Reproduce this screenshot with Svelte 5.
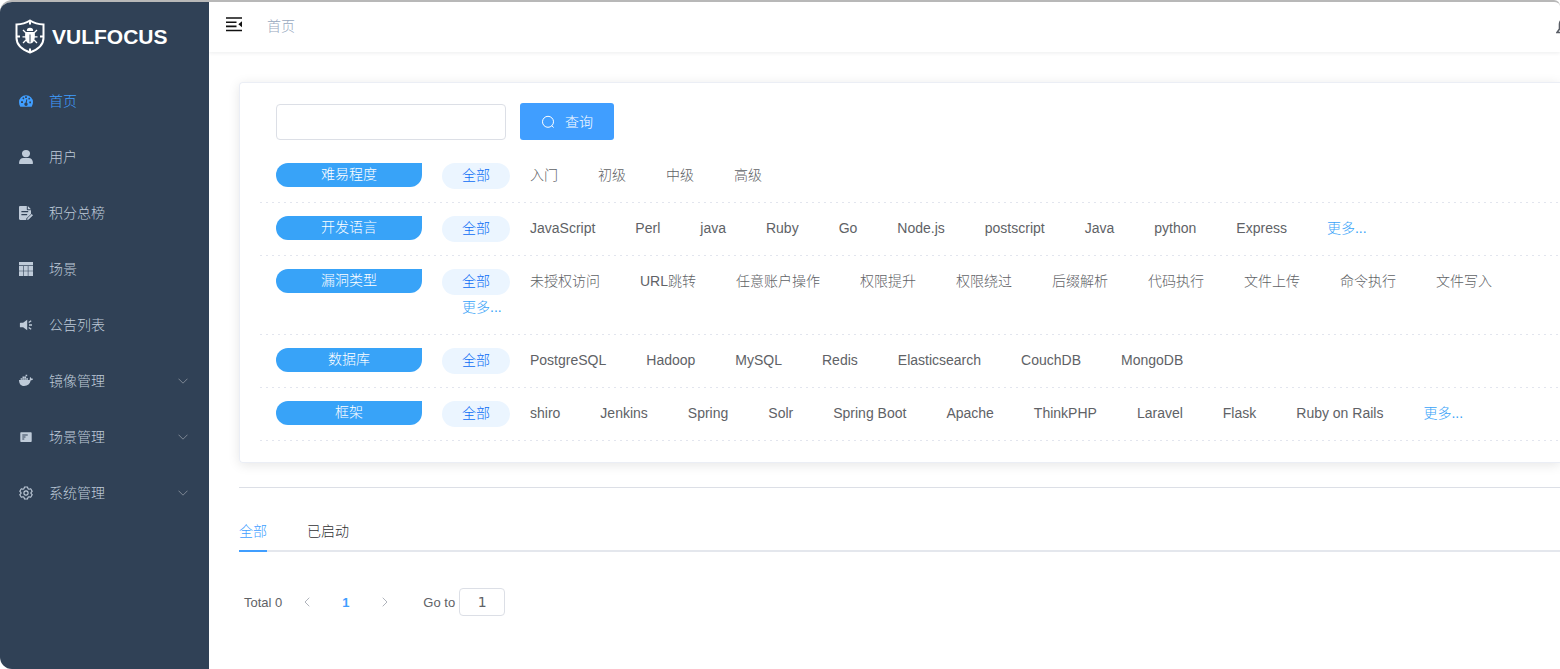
<script>
  let keyword = $state('');
  let page = $state('1');

  const menu = [
    { icon: 'dashboard', label: '首页', active: true },
    { icon: 'user', label: '用户' },
    { icon: 'score', label: '积分总榜' },
    { icon: 'table', label: '场景' },
    { icon: 'notice', label: '公告列表' },
    { icon: 'docker', label: '镜像管理', sub: true },
    { icon: 'scene', label: '场景管理', sub: true },
    { icon: 'gear', label: '系统管理', sub: true }
  ];

  const filters = [
    { name: '难易程度', options: ['入门', '初级', '中级', '高级'] },
    {
      name: '开发语言',
      options: ['JavaScript', 'Perl', 'java', 'Ruby', 'Go', 'Node.js', 'postscript', 'Java', 'python', 'Express'],
      more: true
    },
    {
      name: '漏洞类型',
      options: ['未授权访问', 'URL跳转', '任意账户操作', '权限提升', '权限绕过', '后缀解析', '代码执行', '文件上传', '命令执行', '文件写入'],
      more: true
    },
    { name: '数据库', options: ['PostgreSQL', 'Hadoop', 'MySQL', 'Redis', 'Elasticsearch', 'CouchDB', 'MongoDB'] },
    {
      name: '框架',
      options: ['shiro', 'Jenkins', 'Spring', 'Solr', 'Spring Boot', 'Apache', 'ThinkPHP', 'Laravel', 'Flask', 'Ruby on Rails'],
      more: true
    }
  ];
</script>

{#snippet glyph(name)}
  <svg class="glyph" viewBox="0 0 14 14" fill="currentColor" aria-hidden="true">
    {#if name === 'dashboard'}
      <path fill-rule="evenodd" d="M7 1.2a7 7 0 0 0-7 7c0 1.5.4 2.9 1.2 4.2.1.2.3.3.5.3h10.6c.2 0 .4-.1.5-.3A7.900 7.900 0 0 0 14 8.200a7 7 0 0 0-7-7zM2 7.300h2v1.800H2zM3.300 4l1.300-.7.8 1.500-1.300.8zM6.100 2.200h1.800V4H6.100zM10 3.400l1.300 1-1 1.300L9.100 5zM10.300 7.500H12v1.700h-1.700zM7.300 5.300l1 .2-.6 3.200c.6.3 1 .8 1 1.500a1.700 1.700 0 1 1-2-1.600z" />
    {:else if name === 'user'}
      <ellipse cx="7" cy="3.600" rx="4" ry="3.600" />
      <path d="M0 13.200C0 9.700 2 8 4.300 8h5.400c2.300 0 4.300 1.700 4.300 5.200 0 .5-.3.8-.8.8H.8c-.5 0-.8-.3-.8-.8z" />
    {:else if name === 'score'}
      <path fill-rule="evenodd" d="M1.200 0h6.600v3.200c0 .6.4 1 1 1H12v3.700L7.300 12.600V14H1.200C.5 14 0 13.500 0 12.800V1.200C0 .5.500 0 1.200 0zM2.400 5v1.200h6.800V5zM2.400 8v1.200h5.800V8z" />
      <path d="M8.800 0 12 3.200H8.800zM12.700 8l1.300 1.300L9.700 13.600l-1.600.4.300-1.700z" />
    {:else if name === 'table'}
      <path d="M0 0h14v3.300H0z" />
      <path d="M0 4h4v4.700H0zM4.600 4h4.200v4.700H4.600zM9.400 4H14v4.700H9.400zM0 9.300h4V14H0zM4.600 9.300h4.200V14H4.600zM9.400 9.300H14V14H9.400z" />
    {:else if name === 'notice'}
      <path d="M1.500 4.700h2.600L8.200 1.800v10.400L4.100 9.300H1.500c-.4 0-.6-.2-.6-.6V5.300c0-.4.2-.6.6-.6z" />
      <path d="M9.700 4.500 12.200 2.700M10 7h3M9.700 9.500l2.500 1.800" fill="none" stroke="currentColor" stroke-width="1.300" />
    {:else if name === 'docker'}
      <path d="M0 6h9.800c.7 0 1-.3 1.200-.8-.4-.8-.3-1.500.2-2.200.7.500 1 1 1.100 1.600.6-.1 1.200 0 1.700.3-.4 1-1.100 1.400-2.200 1.400-.9 3.700-3 5.700-6.700 5.700C1.700 12 .1 9.800 0 6z" />
      <path d="M1.600 4.200h1.700v1.500H1.600zM3.500 4.200h1.700v1.500H3.500zM5.400 4.200h1.700v1.500H5.400zM7.300 4.200H9v1.500H7.300zM3.500 2.500h1.700V4H3.500zM5.400 2.500h1.700V4H5.400zM6.600.8h1.600v1.500H6.600z" />
    {:else if name === 'scene'}
      <path fill-rule="evenodd" d="M2.300 2.200h9.400c.6 0 1 .4 1 1v7.700c0 .6-.4 1-1 1H2.300c-.6 0-1-.4-1-1V3.200c0-.6.4-1 1-1zM3.300 4.600v1h5.400v-1zM3.300 6.600v1h3.200v-1zM3.300 8.600v1h2v-1z" />
    {:else}
      <path d="M5.500 1h3l.5 1.700 1 .6 1.700-.5 1.500 2.500L12 6.500v1l1.200 1.200-1.500 2.500-1.700-.5-1 .6L8.500 13h-3L5 11.300l-1-.6-1.700.5L.8 8.700 2 7.500v-1L.8 5.300l1.500-2.500 1.700.5 1-.6z" fill="none" stroke="currentColor" stroke-width="1.100" stroke-linejoin="round" />
      <circle cx="7" cy="7" r="2.100" fill="none" stroke="currentColor" stroke-width="1.100" />
    {/if}
  </svg>
{/snippet}

<div class="window">
  <aside>
    <a class="brand" href="#home">
      <svg class="shield" viewBox="0 0 30 35" aria-hidden="true">
        <path d="M15 1.500C11 4 6.500 5.200 1.500 5.400V19c0 7 5.500 11.500 13.500 14.500C23 30.500 28.500 26 28.500 19V5.400C23.500 5.200 19 4 15 1.500z" fill="none" stroke="#fff" stroke-width="2" />
        <path d="M15 2v3.500M15 29.500V33M2 17.500h3M25 17.500h3" stroke="#fff" stroke-width="2" />
        <path d="M11.800 12a3.200 3.200 0 0 1 6.400 0zM10.300 13h9.400c.6 5.500 0 11.500-4.700 11.500S9.700 18.500 10.300 13z" fill="#fff" />
        <path d="m8 11 2.800 2.800M22 11l-2.800 2.800M7.500 17.800H11M19 17.800h3.500M8 24l3-3M22 24l-3-3" stroke="#fff" stroke-width="1.300" />
        <path d="M15 15.500v8" stroke="#304156" stroke-width="1" />
      </svg>
      <span>VULFOCUS</span>
    </a>
    <nav>
      {#each menu as item}
        <a class="item" class:active={item.active} href="#menu">
          {@render glyph(item.icon)}
          <span>{item.label}</span>
          {#if item.sub}
            <svg class="arrow" viewBox="0 0 10 6" aria-hidden="true"><path d="M.5.700 5 5.200 9.500.700" /></svg>
          {/if}
        </a>
      {/each}
    </nav>
  </aside>

  <div class="main">
    <header>
      <button class="fold" aria-label="menu">
        <svg viewBox="0 0 17 15" aria-hidden="true">
          <path d="M0 1h16M0 5.200h10.500M0 9.400h10.500M0 13.500h16" stroke="#111" stroke-width="1.600" />
          <path d="M16 4.200v6L12.300 7.200z" fill="#111" />
        </svg>
      </button>
      <a class="crumb" href="#home">首页</a>
      <button class="bell" aria-label="notice">
        <svg viewBox="0 0 18 18" aria-hidden="true">
          <path d="M1 14.500h16L14.500 11V6a5.500 5.500 0 0 0-11 0v5zM7 15c.3 2.500 3.700 2.500 4 0" fill="none" stroke="#5a5e66" stroke-width="1.600" />
        </svg>
      </button>
    </header>

    <main>
      <section class="card">
        <form class="search" onsubmit={(e) => e.preventDefault()}>
          <input type="text" aria-label="keyword" bind:value={keyword} />
          <button type="submit">
            <svg viewBox="0 0 14 14" aria-hidden="true"><circle cx="7" cy="6.800" r="5.500" /><path d="m10.700 10.700 2 1.800" /></svg>
            <span>查询</span>
          </button>
        </form>
        {#each filters as row}
          <div class="row">
            <div class="name">{row.name}</div>
            <div class="options">
              <a class="all" href="#all">全部</a>
              {#each row.options as option}
                <a href="#option">{option}</a>
              {/each}
              {#if row.more}<a class="more" href="#more">更多...</a>{/if}
            </div>
          </div>
        {/each}
      </section>

      <hr />

      <div class="tabs">
        <button class="on">全部</button>
        <button>已启动</button>
      </div>

      <div class="pager">
        <span class="total">Total 0</span>
        <button aria-label="previous" disabled><svg viewBox="0 0 6 10" aria-hidden="true"><path d="M5.300.700 1 5l4.300 4.300" /></svg></button>
        <button class="current">1</button>
        <button aria-label="next" disabled><svg viewBox="0 0 6 10" aria-hidden="true"><path d="M.700.700 5 5 .700 9.300" /></svg></button>
        <label for="goto">Go to</label>
        <input id="goto" type="text" bind:value={page} />
      </div>
    </main>
  </div>
</div>

<style>
  :global(body) {
    background: #fff;
    font-family: 'Liberation Sans', 'Noto Sans CJK SC', sans-serif;
    font-size: 14px;
    font-weight: 300;
  }
  * {
    box-sizing: border-box;
  }
  a {
    color: inherit;
    text-decoration: none;
  }
  button,
  input {
    font: inherit;
    color: inherit;
    margin: 0;
  }
  button {
    border: 0;
    padding: 0;
    background: none;
    cursor: pointer;
  }
  svg {
    display: block;
    flex: none;
  }
  .window {
    display: flex;
    min-height: 100vh;
    border-top: 2px solid #b8b8b8;
    border-radius: 12px 6px 0 12px;
    overflow: hidden;
  }
  aside {
    flex: none;
    width: 209px;
    background: #304156;
    color: #bfcbd9;
  }
  .brand {
    display: flex;
    align-items: center;
    gap: 7px;
    height: 71px;
    padding: 0 0 3px 15px;
    color: #fff;
    font-size: 21px;
    font-weight: bold;
  }
  .brand span {
    padding-top: 2px;
  }
  .shield {
    width: 30px;
    height: 35px;
  }
  .item {
    display: flex;
    align-items: center;
    height: 56px;
    padding: 0 21px 0 19px;
  }
  .item span {
    padding-bottom: 2px;
  }
  .item.active {
    color: #409eff;
  }
  .glyph {
    width: 14px;
    height: 14px;
    margin-right: 16px;
  }
  .arrow {
    width: 10px;
    height: 6px;
    margin-left: auto;
  }
  .arrow path {
    fill: none;
    stroke: #7d8794;
  }
  .main {
    flex: 1;
    min-width: 0;
    overflow: hidden;
  }
  header {
    display: flex;
    align-items: center;
    height: 50px;
    padding-left: 17px;
    box-shadow: 0 1px 4px rgba(0, 21, 41, 0.08);
  }
  .fold svg {
    width: 17px;
    height: 15px;
  }
  .fold {
    padding-bottom: 6px;
  }
  .crumb {
    margin-left: 24px;
    padding-bottom: 4px;
    color: #97a8be;
  }
  .bell {
    margin: 0 -14px 0 auto;
  }
  .bell svg {
    width: 18px;
    height: 18px;
  }
  main {
    padding: 30px 0 0 30px;
  }
  .card {
    padding: 20px 0 21px 20px;
    border: 1px solid #ebeef5;
    border-right: 0;
    border-radius: 4px 0 0 4px;
    box-shadow: 0 2px 12px rgba(0, 0, 0, 0.1);
    color: #606266;
  }
  .search {
    display: flex;
    align-items: center;
    gap: 14px;
    padding: 0 0 10px 16px;
  }
  .search input {
    width: 230px;
    height: 36px;
    padding: 0 15px;
    border: 1px solid #dcdfe6;
    border-radius: 4px;
  }
  .search button {
    display: flex;
    align-items: center;
    gap: 10px;
    height: 37px;
    padding: 0 21px;
    border-radius: 3px;
    background: #409eff;
    color: #fff;
  }
  .search span {
    padding-bottom: 2px;
  }
  .search svg {
    width: 14px;
    height: 14px;
    fill: none;
    stroke: #fff;
  }
  .row {
    display: flex;
    gap: 20px;
    padding: 13px 0 14px 16px;
    background: repeating-linear-gradient(90deg, #e2e5ee 0 2px, transparent 2px 6px) left bottom / 100% 1px no-repeat;
  }
  .name {
    flex: none;
    width: 146px;
    height: 24px;
    border-radius: 12px 0 12px 12px;
    background: #38a3f8;
    color: #fff;
    line-height: 22px;
    text-align: center;
  }
  .options {
    display: flex;
    flex-wrap: wrap;
  }
  .options a {
    height: 26px;
    padding: 0 20px;
    line-height: 24px;
    white-space: nowrap;
  }
  .options .all {
    border-radius: 13px;
    background: #ebf5ff;
    color: #0b6cf5;
  }
  .options .more {
    color: #38a3f8;
  }
  hr {
    height: 1px;
    margin: 24px 0;
    border: 0;
    background: #dcdfe6;
  }
  .tabs {
    display: flex;
    gap: 40px;
    height: 40px;
    box-shadow: inset 0 -2px #e4e7ed;
    color: #303133;
  }
  .tabs button {
    padding-bottom: 4px;
  }
  .tabs .on {
    padding-bottom: 2px;
    border-bottom: 2px solid #409eff;
    color: #409eff;
  }
  .pager {
    display: flex;
    align-items: center;
    padding: 36px 0 36px 5px;
    color: #606266;
    font-size: 13px;
  }
  .pager button {
    display: flex;
    align-items: center;
    justify-content: center;
    width: 39px;
    height: 28px;
  }
  .pager .total {
    margin-right: 5px;
  }
  .pager svg {
    width: 6px;
    height: 10px;
    fill: none;
    stroke: #b0b4bc;
  }
  .pager .current {
    color: #409eff;
    font-weight: bold;
  }
  .pager label {
    margin: 0 4px 0 19px;
  }
  .pager input {
    width: 46px;
    height: 28px;
    padding: 0 3px;
    border: 1px solid #dcdfe6;
    border-radius: 4px;
    font-family: 'DejaVu Sans', sans-serif;
    font-size: 14px;
    font-weight: normal;
    text-align: center;
  }
</style>
